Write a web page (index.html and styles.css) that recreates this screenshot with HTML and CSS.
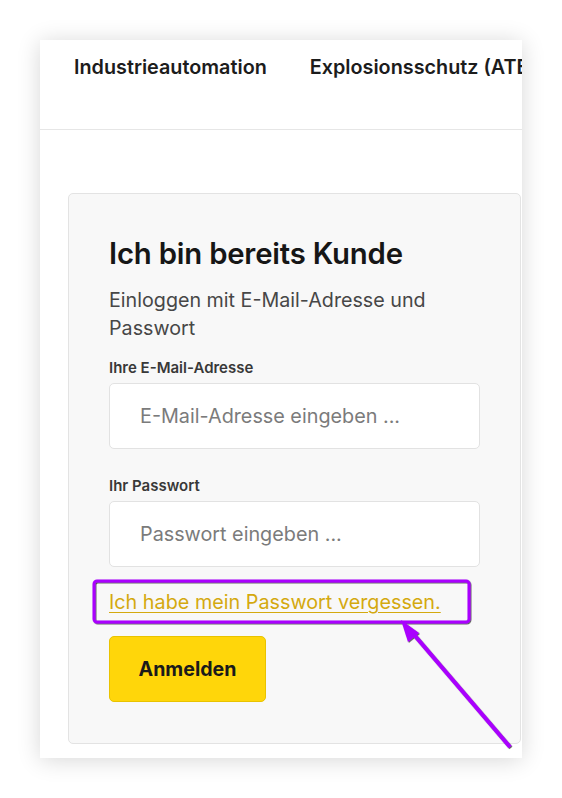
FILE: index.html
```html
<!DOCTYPE html>
<html lang="de">
<head>
<meta charset="utf-8">
<title>Login</title>
<link rel="stylesheet" href="styles.css">
</head>
<body>
<div class="shot">
  <nav class="nav">
    <span class="nav-item">Industrieautomation</span>
    <span class="nav-item">Explosionsschutz (ATEX)</span>
  </nav>
  <main class="content">
    <section class="card">
      <h1 class="title">Ich bin bereits Kunde</h1>
      <p class="sub">Einloggen mit E-Mail-Adresse und Passwort</p>
      <label class="label">Ihre E-Mail-Adresse</label>
      <input class="field" type="text" placeholder="E-Mail-Adresse eingeben ...">
      <label class="label label-2">Ihr Passwort</label>
      <input class="field" type="password" placeholder="Passwort eingeben ...">
      <a class="forgot" href="#">Ich habe mein Passwort vergessen.</a>
      <button class="btn">Anmelden</button>
    </section>
  </main>
</div>
<svg class="annot" width="562" height="798" viewBox="0 0 562 798">
  <defs>
    <filter id="sh" x="-10%" y="-10%" width="120%" height="120%">
      <feDropShadow dx="0.8" dy="0.8" stdDeviation="0.3" flood-color="#000" flood-opacity="0.75"/>
    </filter>
  </defs>
  <g filter="url(#sh)">
    <rect x="94" y="581" width="375" height="41" rx="3" fill="none" stroke="#aa00ff" stroke-width="3"/>
    <line x1="510" y1="747" x2="410" y2="630" stroke="#aa00ff" stroke-width="4" stroke-linecap="butt"/>
    <polygon points="401,620 419,633 408,642" fill="#aa00ff"/>
  </g>
</svg>
</body>
</html>
```
FILE: styles.css
```css
html, body {
  margin: 0;
  padding: 0;
  background: #ffffff;
}
body {
  width: 562px;
  height: 798px;
  position: relative;
  font-family: Inter, "Noto Sans", sans-serif;
  overflow: hidden;
}
.shot {
  margin: 40px 0 0 40px;
  width: 482px;
  height: 718px;
  background: #fff;
  overflow: hidden;
  box-shadow: 0 2px 22px rgba(0, 0, 0, 0.16);
}
.nav {
  height: 90px;
  box-sizing: border-box;
  border-bottom: 1px solid #e6e6e6;
  padding: 14px 0 0 34px;
  display: flex;
  gap: 43px;
  white-space: nowrap;
}
.nav-item {
  font-size: 19.8px;
  font-weight: 600;
  line-height: 26px;
  color: #1c1c1c;
}
.content {
  padding: 63px 0 0 28px;
}
.card {
  width: 453px;
  box-sizing: border-box;
  background: #f8f8f8;
  border: 1px solid #e3e3e3;
  border-radius: 5px;
  padding: 42px 40px 41px 40px;
  display: flex;
  flex-direction: column;
  align-items: flex-start;
}
.title {
  margin: 0;
  font-size: 29.3px;
  font-weight: 600;
  line-height: 36px;
  color: #161616;
  letter-spacing: -0.2px;
}
.sub {
  margin: 14px 0 0 0;
  font-size: 19.7px;
  line-height: 28px;
  color: #474747;
  width: 371px;
}
.label {
  margin-top: 16px;
  font-size: 15px;
  font-weight: 600;
  line-height: 20px;
  color: #383838;
}
.label-2 {
  margin-top: 27px;
}
.field {
  margin-top: 5px;
  width: 371px;
  height: 66px;
  box-sizing: border-box;
  border: 1px solid #e2e2e2;
  border-radius: 5px;
  background: #fff;
  padding: 0 0 0 30px;
  font-family: Inter, "Noto Sans", sans-serif;
  font-size: 19.8px;
  color: #333;
  outline: none;
}
.field::placeholder {
  color: #7b7b7b;
}
.forgot {
  margin-top: 22px;
  font-size: 19.8px;
  line-height: 26px;
  color: #d4a90f;
  text-decoration: underline;
  text-underline-offset: 3px;
}
.btn {
  margin-top: 21px;
  width: 157px;
  height: 66px;
  background: #ffd60a;
  border: 1px solid #e9c300;
  border-radius: 5px;
  font-family: Inter, "Noto Sans", sans-serif;
  font-size: 19.6px;
  font-weight: 700;
  color: #1a1a1a;
  cursor: pointer;
}
.annot {
  position: absolute;
  left: 0;
  top: 0;
  pointer-events: none;
}
```
